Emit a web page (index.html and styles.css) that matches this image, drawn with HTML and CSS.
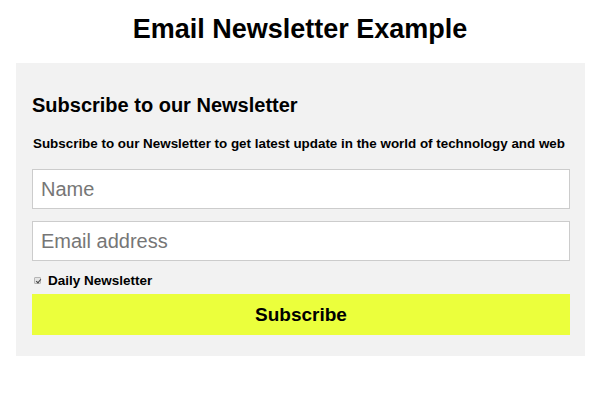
FILE: index.html
```html
<!DOCTYPE html>
<html>
<head>
<meta charset="utf-8">
<link rel="stylesheet" href="styles.css">
</head>
<body>
<h1 class="title">Email Newsletter Example</h1>
<form class="box">
  <h2 class="heading">Subscribe to our Newsletter</h2>
  <p class="lead">Subscribe to our Newsletter to get latest update in the world of technology and web</p>
  <input class="field" type="text" placeholder="Name">
  <input class="field" type="text" placeholder="Email address">
  <label class="check"><input class="check-box" type="checkbox" checked> Daily Newsletter</label>
  <button class="btn" type="button">Subscribe</button>
</form>
</body>
</html>
```
FILE: styles.css
```css
html, body { margin: 0; padding: 0; background: #fff; }
body { font-family: "Liberation Sans", Arial, sans-serif; color: #000; }
.title {
  margin: 0;
  padding-top: 13px;
  height: 50px;
  text-align: center;
  font-size: 27px;
  font-weight: bold;
  line-height: 32px;
}
.box {
  margin: 0 15px 0 16px;
  padding: 26px 15px 21px 16px;
  background: #f2f2f2;
  display: flex;
  flex-direction: column;
}
.heading {
  margin: 0;
  font-size: 20px;
  line-height: 32px;
  font-weight: bold;
}
.lead {
  margin: 15px 0 17px 0;
  font-size: 13.4px;
  line-height: 16px;
  font-weight: bold;
  padding-left: 1px;
}
.field {
  box-sizing: border-box;
  height: 40px;
  margin: 0 0 12px 0;
  padding: 0 8px;
  border: 1px solid #cccccc;
  background: #fff;
  font-family: "Liberation Sans", Arial, sans-serif;
  font-size: 20px;
  color: #000;
  outline: none;
}
.field::placeholder { color: #767676; }
.check {
  display: flex;
  align-items: center;
  gap: 7px;
  font-size: 13.5px;
  font-weight: bold;
  height: 15px;
  margin: 0 0 6px 0;
  padding-left: 2px;
}
.check-box {
  -webkit-appearance: none;
  appearance: none;
  position: relative;
  margin: 0;
  width: 7px;
  height: 7px;
  border: 1px solid #b5b5b5;
  background: #e4e4e4;
  border-radius: 1px;
}
.check-box::after {
  content: "";
  position: absolute;
  left: 2px;
  top: 0px;
  width: 2px;
  height: 4px;
  border-right: 1px solid #444;
  border-bottom: 1px solid #444;
  transform: rotate(40deg);
}
.btn {
  height: 41px;
  border: 0;
  background: #ebff3c;
  font-family: "Liberation Sans", Arial, sans-serif;
  font-size: 19px;
  font-weight: bold;
  color: #000;
  padding: 0;
}
```
